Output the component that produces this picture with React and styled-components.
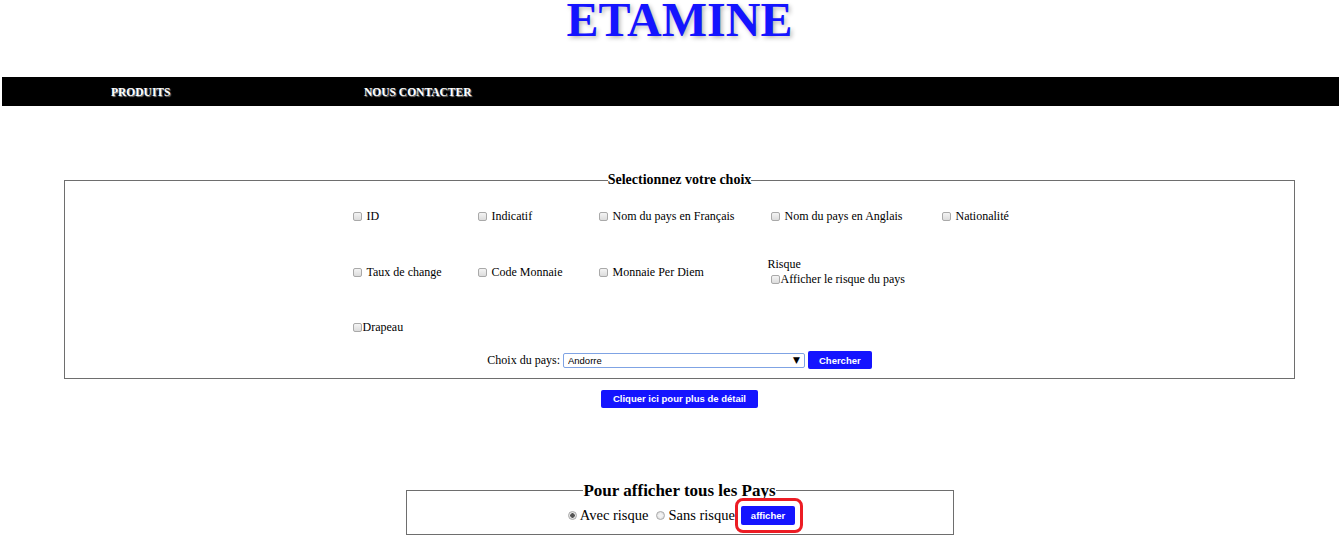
import React from "react"
import styled, { createGlobalStyle } from "styled-components"

const GlobalStyles = createGlobalStyle`
  body {
    margin: 0;
    background: #fff;
    font-family: "Liberation Serif", "Times New Roman", serif;
    color: #000;
  }
`

const Title = styled.h1`
  margin: 0 46px 0 64px;
  height: 77px;
  line-height: 40px;
  text-align: center;
  font-size: 48px;
  font-weight: bold;
  color: #1414ff;
  text-shadow: 2px 2px 4px #b9b9b9;
`

const Nav = styled.nav`
  display: flex;
  align-items: center;
  height: 29px;
  margin: 0 2px;
  padding-left: 109px;
  background: #000;
`

const NavItem = styled.a`
  width: 253px;
  padding-top: 1px;
  color: #fff;
  font-size: 11.5px;
  font-weight: bold;
  text-decoration: none;
  text-shadow: 1px 1px 1px #8a8a8a;
`

const Main = styled.main`
  margin: 0 46px 0 64px;
  padding-top: 66px;
  display: flex;
  flex-direction: column;
  align-items: center;
`

const Fieldset = styled.fieldset`
  box-sizing: border-box;
  width: ${(p) => p.$width};
  margin: 0;
  padding: ${(p) => p.$padding};
  border: 1px solid #6e6e6e;
  min-width: 0;
`

const Legend = styled.legend`
  margin: 0 auto;
  padding: 0;
  font-weight: bold;
  font-size: ${(p) => p.$size};
`

const Choices = styled.div`
  display: grid;
  grid-template-columns: 125px 121px 172px 171px 70px;
  justify-content: center;
  align-items: center;
  row-gap: 33px;
  padding-left: 5px;
  font-size: 12px;
`

const Choice = styled.label`
  display: flex;
  align-items: center;
  gap: ${(p) => (p.$tight ? "1px" : "5px")};
  white-space: nowrap;
`

const Box = styled.input.attrs({ type: "checkbox" })`
  appearance: none;
  flex-shrink: 0;
  margin: 0;
  width: 9px;
  height: 9px;
  border: 1px solid #a9a9a9;
  border-radius: 2px;
  background: linear-gradient(#f4f4f4, #dcdcdc);
`

const RiskCell = styled.div`
  display: flex;
  flex-direction: column;
  margin-left: -3px;
  line-height: 15px;
  & > label {
    padding-left: 3px;
  }
`

const SearchRow = styled.div`
  display: flex;
  align-items: center;
  justify-content: center;
  gap: 3px;
  margin-top: 16px;
  font-size: 12px;
`

const SelectWrap = styled.div`
  position: relative;
  width: 242px;
  height: 15px;
`

const Select = styled.select`
  appearance: none;
  box-sizing: border-box;
  width: 100%;
  height: 100%;
  margin: 0;
  padding: 0 0 0 4px;
  border: 1px solid #7fa3e4;
  border-radius: 2px;
  background: #fff;
  font-family: "Liberation Sans", Arial, sans-serif;
  font-size: 9.5px;
  color: #000;
`

const Arrow = styled.span`
  position: absolute;
  right: 5px;
  top: 1px;
  font-family: "DejaVu Sans", sans-serif;
  font-size: 9px;
  line-height: 13px;
  pointer-events: none;
`

const Button = styled.button`
  box-sizing: border-box;
  height: ${(p) => p.$h || "18px"};
  padding: 0 ${(p) => p.$px || "10px"};
  margin: 0;
  border: none;
  border-radius: 2px;
  background: #1414ff;
  color: #fff;
  font-family: "Liberation Sans", Arial, sans-serif;
  font-size: 9.5px;
  font-weight: bold;
`

const DetailRow = styled.div`
  margin-top: 9px;
  margin-bottom: 73px;
`

const RadioRow = styled.div`
  display: flex;
  align-items: center;
  justify-content: center;
  margin-top: 5px;
  padding-left: 4px;
  font-size: 14.5px;
`

const RadioLabel = styled.label`
  display: flex;
  align-items: center;
  gap: 3px;
  margin-right: ${(p) => p.$gap};
`

const Radio = styled.input.attrs({ type: "radio" })`
  appearance: none;
  margin: 0;
  width: 9px;
  height: 9px;
  border: 1px solid #a9a9a9;
  border-radius: 50%;
  background: radial-gradient(circle, ${(p) => (p.defaultChecked ? "#555 0 2px" : "#f2f2f2 0 2px")}, #e4e4e4 2.5px);
`

const Highlight = styled.span`
  position: relative;
  display: inline-flex;
  &::after {
    content: "";
    position: absolute;
    left: -6px;
    right: -8px;
    top: -8px;
    bottom: -8px;
    border: 3.5px solid #ec1c24;
    border-radius: 8px;
    pointer-events: none;
  }
`

const App = () => {
  return (
    <>
      <GlobalStyles />
      <Title>ETAMINE</Title>
      <Nav>
        <NavItem href="#">PRODUITS</NavItem>
        <NavItem href="#">NOUS CONTACTER</NavItem>
      </Nav>
      <Main>
        <Fieldset $width="100%" $padding="21px 0 9px">
          <Legend $size="14px">Selectionnez votre choix</Legend>
          <Choices>
            <Choice><Box />ID</Choice>
            <Choice><Box />Indicatif</Choice>
            <Choice><Box />Nom du pays en Français</Choice>
            <Choice><Box />Nom du pays en Anglais</Choice>
            <Choice><Box />Nationalité</Choice>
            <Choice><Box />Taux de change</Choice>
            <Choice><Box />Code Monnaie</Choice>
            <Choice><Box />Monnaie Per Diem</Choice>
            <RiskCell>
              <span>Risque</span>
              <Choice $tight><Box />Afficher le risque du pays</Choice>
            </RiskCell>
            <span />
            <Choice $tight><Box />Drapeau</Choice>
          </Choices>
          <SearchRow>
            <span>Choix du pays:</span>
            <SelectWrap>
              <Select defaultValue="Andorre">
                <option>Andorre</option>
              </Select>
              <Arrow>▼</Arrow>
            </SelectWrap>
            <Button $px="11px">Chercher</Button>
          </SearchRow>
        </Fieldset>
        <DetailRow>
          <Button $px="12px">Cliquer ici pour plus de détail</Button>
        </DetailRow>
        <Fieldset $width="548px" $padding="0 0 9px">
          <Legend $size="17px">Pour afficher tous les Pays</Legend>
          <RadioRow>
            <RadioLabel $gap="8px"><Radio name="r" defaultChecked />Avec risque</RadioLabel>
            <RadioLabel $gap="6px"><Radio name="r" />Sans risque</RadioLabel>
            <Highlight>
              <Button $h="19px" $px="10px">afficher</Button>
            </Highlight>
          </RadioRow>
        </Fieldset>
      </Main>
    </>
  )
}

export default App
